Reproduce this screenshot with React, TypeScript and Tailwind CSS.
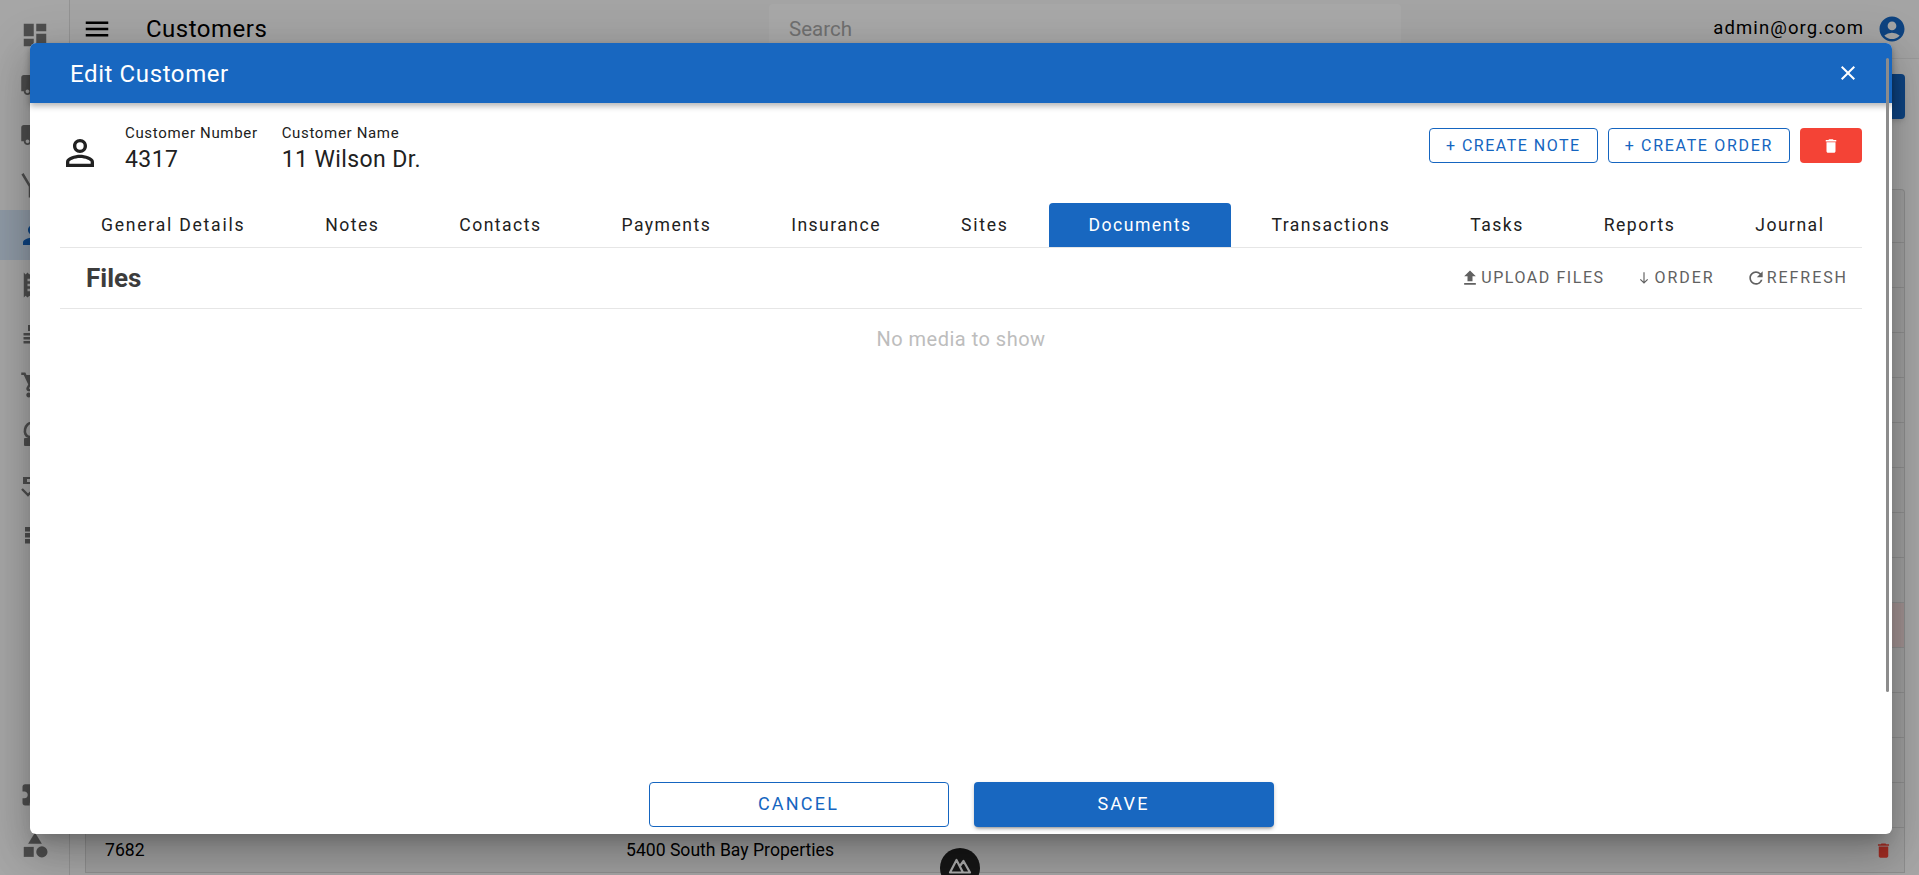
import React from "react";
import {
  MdDashboard, MdLocalShipping, MdPerson, MdReceipt, MdShoppingCart,
  MdExtension, MdCategory, MdMenu, MdAccountCircle, MdClose, MdPersonOutline,
  MdDelete, MdFileUpload, MdSouth, MdRefresh,
} from "react-icons/md";

const tabs = ["General Details", "Notes", "Contacts", "Payments", "Insurance", "Sites", "Documents", "Transactions", "Tasks", "Reports", "Journal"];

function Dolly() {
  return (
    <svg viewBox="0 0 24 24" width="30" height="30" fill="none" stroke="currentColor" strokeWidth="2">
      <path d="M2 3l6 10v9M8 13l12-9" />
    </svg>
  );
}

function ListIcon() {
  return (
    <svg viewBox="0 0 30 30" width="30" height="30" fill="currentColor">
      <rect x="8" y="5" width="14" height="6" />
      <rect x="3.5" y="13" width="22" height="2.5" />
      <rect x="3.5" y="17" width="22" height="2.5" />
      <rect x="3.5" y="21" width="22" height="2.5" />
    </svg>
  );
}

function CoinIcon() {
  return (
    <svg viewBox="0 0 30 30" width="30" height="30" fill="currentColor">
      <ellipse cx="10" cy="10" rx="5" ry="7" fill="none" stroke="currentColor" strokeWidth="2.6" transform="rotate(12 10 10)" />
      <rect x="4" y="18" width="22" height="8" rx="1" />
    </svg>
  );
}

function TaskIcon() {
  return (
    <svg viewBox="0 0 30 30" width="30" height="30" fill="currentColor">
      <path d="M3 7h20v7H3zM7 9v3h3V9z" fillRule="evenodd" />
      <path d="M2 19l6 6 6-6" fill="none" stroke="currentColor" strokeWidth="2.4" />
    </svg>
  );
}

function BlocksIcon() {
  return (
    <svg viewBox="0 0 30 30" width="30" height="30" fill="currentColor">
      <rect x="5" y="7" width="20" height="4.5" />
      <rect x="5" y="13" width="20" height="4.5" />
      <rect x="5" y="19" width="20" height="4.5" />
    </svg>
  );
}

const sideTop: React.ReactNode[] = [
  <MdDashboard size={30} />,
  <MdLocalShipping size={30} />,
  <MdLocalShipping size={30} />,
  <Dolly />,
  <MdPerson size={30} className="text-[#1565c0] -translate-x-[2px]" />,
  <MdReceipt size={30} />,
  <ListIcon />,
  <MdShoppingCart size={30} />,
  <CoinIcon />,
  <TaskIcon />,
  <BlocksIcon />,
];

function Sidebar() {
  return (
    <aside className="w-[70px] shrink-0 h-full border-r border-[#dcdcdc] flex flex-col pt-[10px] pb-[5px] text-[#757575]">
      {sideTop.map((icon, i) => (
        <div key={i} className={`h-[50px] flex items-center justify-center ${i === 4 ? "bg-[#d4e4f7]" : ""}`}>
          {icon}
        </div>
      ))}
      <div className="mt-auto h-[50px] flex items-center justify-center"><MdExtension size={30} /></div>
      <div className="mt-[2px] h-[50px] flex items-center justify-center"><MdCategory size={30} /></div>
    </aside>
  );
}

function Background() {
  const rows = Array.from({ length: 13 });
  return (
    <div className="flex h-full bg-[#f8f8f8]">
      <Sidebar />
      <div className="flex-1 min-w-0 flex flex-col">
        <header className="h-[59px] shrink-0 flex items-center pl-[12px] pr-[12px] border-b border-[#e6e6e6] bg-[#f5f5f5]">
          <MdMenu size={30} className="text-black" />
          <span className="ml-[34px] text-[24px] leading-none text-black tracking-[0.5px] w-[120px]">Customers</span>
          <div className="ml-[503px] w-[632px] h-[48px] self-start mt-[4px] rounded bg-[#fbfbfb] pl-[20px] pt-[12px] text-[20.5px] leading-[26px] text-[#a8a8a8]">Search</div>
          <span className="ml-auto text-[18.5px] tracking-[1.1px] text-black">admin@org.com</span>
          <MdAccountCircle size={30} className="ml-[13px] text-[#1565c0]" />
        </header>
        <div className="h-[15px] shrink-0" />
        <div className="pl-[15px] pr-[14px] flex justify-end">
          <div className="w-[200px] h-[45px] rounded bg-[#1565c0] shadow-md" />
        </div>
        <div className="mt-[70px] ml-[15px] mr-[14px] border-x border-t border-[#d4d4d4] rounded-t bg-[#eeeeee]">
          <div className="h-[53px] border-b border-[#d4d4d4]" />
          {rows.map((_, i) => (
            <div key={i} className={`h-[45px] border-b border-[#d4d4d4] flex items-center ${i === 8 ? "bg-[#f0d8d8]" : ""}`} />
          ))}
          <div className="h-[45px] border-b border-[#d4d4d4] flex items-center text-[17.6px] text-black relative">
            <span className="ml-[19px] w-[521px]">7682</span>
            <span>5400 South Bay Properties</span>
            <MdDelete size={19} className="ml-auto mr-[11px] text-[#f44336]" />
          </div>
        </div>
      </div>
    </div>
  );
}

function OutlineBtn({ children, cls }: { children: React.ReactNode; cls: string }) {
  return (
    <button className={`h-[35px] px-[16px] pt-px rounded border border-[#1565c0] text-[#1565c0] text-[16px] ${cls} bg-white`}>
      {children}
    </button>
  );
}

function Action({ icon, label, cls }: { icon: React.ReactNode; label: string; cls: string }) {
  return (
    <button className={`flex items-center ${cls} text-[16px] text-[#616161]`}>
      {icon}
      <span>{label}</span>
    </button>
  );
}

export default function App() {
  return (
    <div className="relative h-screen overflow-hidden font-['Roboto',sans-serif]">
      <Background />
      {/* Nuxt devtools badge */}
      <div className="absolute left-[940px] top-[848px] w-[40px] h-[40px] rounded-full bg-[#222] flex justify-center pt-[10px]">
        <svg width="24" height="16" viewBox="0 0 24 16" fill="none" stroke="#fff" strokeWidth="2.2" strokeLinejoin="round">
          <path d="M2 14.5L8.5 2l6.5 12.5zM12 8l3.5-5L22 14.5h-7" />
        </svg>
      </div>
      {/* backdrop */}
      <div className="absolute inset-0 bg-[rgba(0,0,0,0.33)]" />
      {/* dialog */}
      <div className="absolute left-[30px] top-[43px] w-[1862px] h-[791px] bg-white rounded-md shadow-[0_11px_15px_-7px_rgba(0,0,0,0.2),0_24px_38px_3px_rgba(0,0,0,0.14),0_9px_46px_8px_rgba(0,0,0,0.12)] flex flex-col">
        <div className="relative z-10 h-[60px] shrink-0 bg-[#1867c0] rounded-t-md shadow-[0_3px_6px_rgba(0,0,0,0.3)] flex items-center pl-[40px] pr-[32px] text-white">
          <span className="text-[24px] tracking-[0.6px] pt-px">Edit Customer</span>
          <MdClose size={24} className="ml-auto" />
        </div>
        <div className="flex-1 min-h-0 flex flex-col px-[30px]">
          <div className="h-[100px] shrink-0 flex items-start">
            <MdPersonOutline size={42} className="-ml-px mt-[29px] text-[#212121]" />
            <div className="ml-[24px] pt-[20px]">
              <div className="text-[15px] leading-[20px] tracking-[0.67px] text-[#212121]">Customer Number</div>
              <div className="mt-[2px] text-[23px] leading-[30px] tracking-[0.4px] text-[#212121]">4317</div>
            </div>
            <div className="ml-[24px] pt-[20px]">
              <div className="text-[15px] leading-[20px] tracking-[0.67px] text-[#212121]">Customer Name</div>
              <div className="mt-[2px] text-[23px] leading-[30px] tracking-[0.4px] text-[#212121]">11 Wilson Dr.</div>
            </div>
            <div className="ml-auto pt-[25px] flex gap-[10px]">
              <OutlineBtn cls="tracking-[1.5px]">+ CREATE NOTE</OutlineBtn>
              <OutlineBtn cls="tracking-[1.68px]">+ CREATE ORDER</OutlineBtn>
              <button className="w-[62px] h-[35px] rounded bg-[#f44336] flex items-center justify-center text-white">
                <MdDelete size={18} />
              </button>
            </div>
          </div>
          <div className="h-[45px] shrink-0 flex pl-px border-b border-[#e6e6e6]">
            {tabs.map((t, i) => (
              <div
                key={t}
                className={`h-[44px] px-[40px] flex items-center whitespace-nowrap text-[17.6px] ${
                  i === 0 || i === 5 ? "tracking-[1.75px]" : "tracking-[1.45px]"
                } ${t === "Documents" ? "bg-[#1867c0] text-white rounded-t" : "text-[#212121]"}`}
              >
                {t}
              </div>
            ))}
          </div>
          <div className="h-[61px] shrink-0 flex items-center pl-[26px] pr-[14px] border-b border-[#e6e6e6]">
            <span className="text-[26px] font-bold text-[#3c3c3c]">Files</span>
            <div className="ml-auto flex items-center">
              <Action icon={<MdFileUpload size={20} />} label="UPLOAD FILES" cls="gap-px tracking-[1.55px]" />
              <div className="ml-[32px]"><Action icon={<MdSouth size={14} />} label="ORDER" cls="gap-[4px] tracking-[1.95px]" /></div>
              <div className="ml-[31px]"><Action icon={<MdRefresh size={20} />} label="REFRESH" cls="gap-px tracking-[1.95px]" /></div>
            </div>
          </div>
          <div className="pt-[15px] text-center text-[20px] leading-[30px] tracking-[0.5px] text-[#bdbdbd]">No media to show</div>
          <div className="mt-auto pb-[7px] flex justify-center gap-[25px]">
            <button className="w-[300px] h-[45px] pb-[2px] rounded border border-[#1565c0] text-[#1565c0] text-[18px] tracking-[2.2px] bg-white">CANCEL</button>
            <button className="w-[300px] h-[45px] pb-[2px] rounded bg-[#1867c0] text-white text-[18px] tracking-[2.2px] shadow-[0_3px_3px_-2px_rgba(0,0,0,0.3),0_2px_4px_rgba(0,0,0,0.2)]">SAVE</button>
          </div>
        </div>
        {/* scrollbar thumb */}
        <div className="absolute z-20 left-[1856px] top-[15px] w-[3px] h-[634px] rounded-full bg-[#8c8c8c]" />
      </div>
    </div>
  );
}
